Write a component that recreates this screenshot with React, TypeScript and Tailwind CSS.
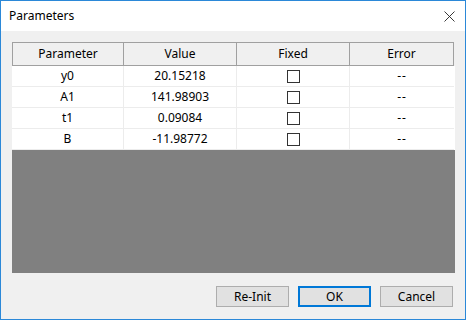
const rows = [
  { name: "y0", value: "20.15218" },
  { name: "A1", value: "141.98903" },
  { name: "t1", value: "0.09084" },
  { name: "B", value: "-11.98772" },
];

const cols = "grid grid-cols-[112px_113px_113px_104px]";

const Btn = ({ label, primary }: { label: string; primary?: boolean }) => (
  <button
    className={
      primary
        ? "w-[73px] h-[21px] border-2 border-[#0078d7] bg-[#e1e1e1] text-[12px] text-black flex items-center justify-center"
        : "w-[73px] h-[21px] border border-[#adadad] bg-[#e1e1e1] text-[12px] text-black flex items-center justify-center"
    }
  >
    {label}
  </button>
);

export default function App() {
  return (
    <div
      className="w-[466px] h-[320px] flex flex-col border border-[#2b88d8] bg-[#f0f0f0] text-black"
      style={{ fontFamily: '"Segoe UI", "Noto Sans", sans-serif' }}
    >
      {/* title bar */}
      <div className="h-[30px] bg-white flex items-center justify-between pl-2 pr-[9px]">
        <span className="text-[12px]">Parameters</span>
        <svg width="11" height="11" viewBox="0 0 11 11" className="mr-[1px]">
          <path d="M0.5 0.5 L10.5 10.5 M10.5 0.5 L0.5 10.5" stroke="#222" strokeWidth="0.9" />
        </svg>
      </div>

      <div className="flex-1 flex flex-col pl-[11px] pr-[10px] pt-[11px]">
        {/* table */}
        <div className="h-[231px] w-[443px] flex flex-col bg-[#808080]">
          <div className={`${cols} h-[24px] bg-[#f0f0f0] text-[12px]`}>
            {["Parameter", "Value", "Fixed", "Error"].map((h, i) => (
              <div
                key={h}
                className={
                  i === 0
                    ? "flex items-center justify-center border border-[#a0a0a0]"
                    : "flex items-center justify-center border-y border-r border-[#a0a0a0]"
                }
              >
                {h}
              </div>
            ))}
          </div>
          {rows.map((r) => (
            <div key={r.name} className={`${cols} h-[21px] bg-white text-[12px]`}>
              <div className="flex items-center justify-center border-r border-b border-[#ececec]">{r.name}</div>
              <div className="flex items-center justify-center border-r border-b border-[#ececec]">{r.value}</div>
              <div className="flex items-center justify-center border-r border-b border-[#ececec]">
                <div className="w-[13px] h-[13px] border border-[#333] bg-white" />
              </div>
              <div className="flex items-center justify-center border-b border-[#ececec] tracking-[1px]">--</div>
            </div>
          ))}
        </div>

        {/* buttons */}
        <div className="mt-[13px] flex justify-end gap-[9px] pr-[2px]">
          <Btn label="Re-Init" />
          <Btn label="OK" primary />
          <Btn label="Cancel" />
        </div>
      </div>
    </div>
  );
}
